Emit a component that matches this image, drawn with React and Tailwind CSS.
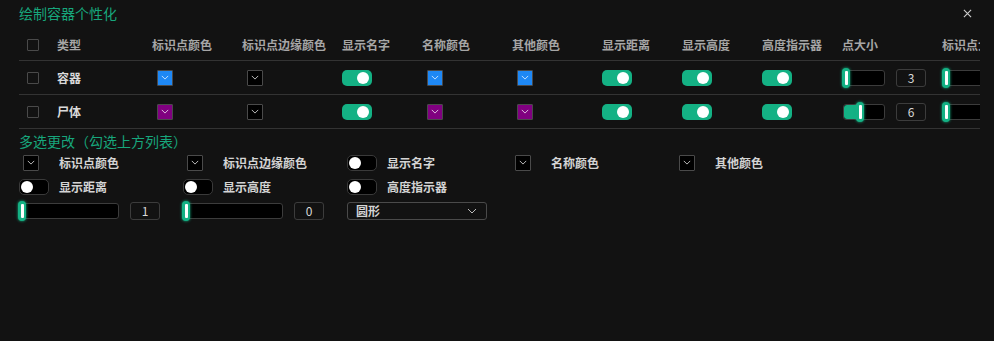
import React from 'react';

const Chevron = ({ className = '' }) => (
  <svg viewBox="0 0 10 6" className={className} fill="none" stroke="currentColor" strokeWidth="1">
    <path d="M1 1l4 4 4-4" />
  </svg>
);

const Swatch = ({ color }) => (
  <div
    className="w-[16px] h-[16px] flex items-center justify-center border border-[#4a4a4a] rounded-[1px] text-white"
    style={{ backgroundColor: color }}
  >
    <Chevron className="w-[8px] h-[5px] opacity-90" />
  </div>
);

const Toggle = ({ on }) =>
  on ? (
    <div className="w-[30px] h-[16px] rounded-[5px] bg-[#14b184] flex items-center justify-end pr-[3px]">
      <div className="w-[12px] h-[12px] rounded-full bg-white" />
    </div>
  ) : (
    <div className="w-[30px] h-[16px] rounded-[5px] bg-black border border-[#3a3a3a] flex items-center pl-[1px]">
      <div className="w-[12px] h-[12px] rounded-full bg-white" />
    </div>
  );

const Slider = ({ width, fill = 0 }) => (
  <div className="relative h-[16px] bg-black border border-[#3c3c3c] rounded-[3px]" style={{ width }}>
    {fill > 0 && (
      <div className="absolute left-0 top-0 bottom-0 bg-[#14b184] rounded-l-[3px]" style={{ width: fill + 4 }} />
    )}
    <div
      className="absolute top-[-3px] w-[8px] h-[20px] rounded-[4px] bg-[#14b184] flex items-center justify-center shadow-[0_0_3px_#14b184]"
      style={{ left: fill - 2 }}
    >
      <div className="w-[3px] h-[14px] bg-white rounded-[1px]" />
    </div>
  </div>
);

const NumBox = ({ v }) => (
  <div className="w-[30px] h-[18px] border border-[#3c3c3c] rounded-[3px] flex items-center justify-center text-[12px] text-[#d8d8d8]">
    {v}
  </div>
);

const Check = () => <div className="w-[12px] h-[12px] border border-[#4a4a4a] rounded-[1px]" />;

const WIDTHS = [30, 95, 90, 100, 80, 90, 90, 80, 80, 80, 100, 100];
const HEADERS = ['', '类型', '标识点颜色', '标识点边缘颜色', '显示名字', '名称颜色', '其他颜色', '显示距离', '显示高度', '高度指示器', '点大小', '标识点大小'];

const ROWS = [
  { name: '容器', color: '#1e88f5', size: 3, fill: 0 },
  { name: '尸体', color: '#800080', size: 6, fill: 14 },
];

function Cell({ i, children, className = '' }) {
  return (
    <div className={`shrink-0 pl-[8px] flex items-center ${className}`} style={{ width: WIDTHS[i] }}>
      {children}
    </div>
  );
}

export default function App() {
  return (
    <div
      className="w-[994px] h-[341px] bg-[#121212] overflow-hidden relative"
      style={{ fontFamily: '"Noto Sans CJK SC", "Noto Sans", sans-serif' }}
    >
      <div className="h-[30px] flex items-start justify-between pl-[19px] pr-[22px] pt-[3px]">
        <span className="text-[14px] text-[#17a67c] leading-[20px]">绘制容器个性化</span>
        <svg viewBox="0 0 10 10" className="w-[9px] h-[9px] mt-[6px] text-[#cfcfcf]" stroke="currentColor" strokeWidth="1.2">
          <path d="M1 1l8 8M9 1l-8 8" />
        </svg>
      </div>

      <div className="ml-[19px] w-[961px] overflow-hidden">
        <div className="flex h-[31px] border-b border-[#333] pb-[1px]">
          {HEADERS.map((h, i) => (
            <Cell key={i} i={i} className="text-[12px] font-bold text-[#a6a6a6] whitespace-nowrap">
              {i === 0 ? <Check /> : h}
            </Cell>
          ))}
        </div>
        {ROWS.map((r) => (
          <div key={r.name} className="flex h-[34px] border-b border-[#333]">
            <Cell i={0}><Check /></Cell>
            <Cell i={1} className="text-[12px] font-bold text-[#dadada]">{r.name}</Cell>
            <Cell i={2} className="pl-[13px]"><Swatch color={r.color} /></Cell>
            <Cell i={3} className="pl-[13px]"><Swatch color="#000" /></Cell>
            <Cell i={4}><Toggle on /></Cell>
            <Cell i={5} className="pl-[13px]"><Swatch color={r.color} /></Cell>
            <Cell i={6} className="pl-[13px]"><Swatch color={r.color} /></Cell>
            <Cell i={7}><Toggle on /></Cell>
            <Cell i={8}><Toggle on /></Cell>
            <Cell i={9}><Toggle on /></Cell>
            <Cell i={10} className="pl-[9px] gap-[11px]">
              <Slider width={42} fill={r.fill} />
              <NumBox v={r.size} />
            </Cell>
            <Cell i={11} className="pl-[9px]"><Slider width={60} /></Cell>
          </div>
        ))}
      </div>

      <div className="pl-[19px]">
        <div className="text-[14px] text-[#17a67c] leading-[20px] pt-[2px]">多选更改（勾选上方列表）</div>
        <div className="flex h-[23px] items-center text-[12px] font-bold text-[#d4d4d4]">
          {['标识点颜色', '标识点边缘颜色', '显示名字', '名称颜色', '其他颜色'].map((l, i) => (
            <div key={l} className="w-[164px] shrink-0 flex items-center">
              <div className="w-[40px] shrink-0">
                {i === 2 ? <Toggle /> : <div className="ml-[4px]"><Swatch color="#000" /></div>}
              </div>
              <span>{l}</span>
            </div>
          ))}
        </div>
        <div className="flex h-[26px] items-center text-[12px] font-bold text-[#d4d4d4]">
          {['显示距离', '显示高度', '高度指示器'].map((l) => (
            <div key={l} className="w-[164px] shrink-0 flex items-center">
              <div className="w-[40px] shrink-0"><Toggle /></div>
              <span>{l}</span>
            </div>
          ))}
        </div>
        <div className="flex h-[22px] items-center">
          {[1, 0].map((v) => (
            <div key={v} className="w-[164px] shrink-0 flex items-center gap-[11px]">
              <Slider width={100} />
              <NumBox v={v} />
            </div>
          ))}
          <div className="w-[140px] h-[18px] border border-[#4a4a4a] rounded-[3px] flex items-center justify-between pl-[8px] pr-[9px] text-[12px] font-bold text-[#d4d4d4]">
            <span>圆形</span>
            <Chevron className="w-[10px] h-[6px] text-[#bbb]" />
          </div>
        </div>
      </div>
    </div>
  );
}
